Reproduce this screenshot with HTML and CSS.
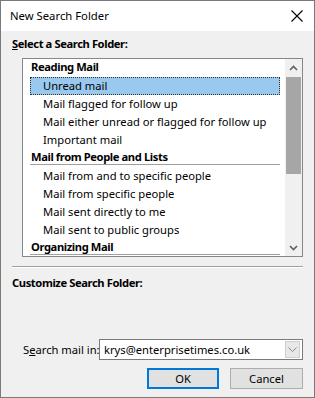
FILE: index.html
```html
<!DOCTYPE html>
<html>
<head>
<meta charset="utf-8">
<link rel="stylesheet" href="styles.css">
</head>
<body>
<div class="window">
  <div class="titlebar">
    <span class="title">New Search Folder</span>
    <svg class="close" width="12" height="12" viewBox="0 0 12 12"><path d="M0.5 0.5 L11.5 11.5 M11.5 0.5 L0.5 11.5" stroke="#000" stroke-width="1.1" fill="none"/></svg>
  </div>
  <div class="content">
    <div class="label bold"><u>S</u>elect a Search Folder:</div>
    <div class="listbox">
      <div class="list">
        <div class="row header first">Reading Mail</div>
        <div class="row item selected">Unread mail</div>
        <div class="row item">Mail flagged for follow up</div>
        <div class="row item">Mail either unread or flagged for follow up</div>
        <div class="row item">Important mail</div>
        <div class="row header">Mail from People and Lists</div>
        <div class="row item">Mail from and to specific people</div>
        <div class="row item">Mail from specific people</div>
        <div class="row item">Mail sent directly to me</div>
        <div class="row item">Mail sent to public groups</div>
        <div class="row header">Organizing Mail</div>
      </div>
      <div class="scrollbar">
        <div class="arrow">
          <svg width="9" height="6" viewBox="0 0 9 6"><path d="M1 5 L4.5 1.5 L8 5" stroke="#606060" stroke-width="1.6" fill="none"/></svg>
        </div>
        <div class="track"><div class="thumb"></div></div>
        <div class="arrow">
          <svg width="9" height="6" viewBox="0 0 9 6"><path d="M1 1 L4.5 4.5 L8 1" stroke="#606060" stroke-width="1.6" fill="none"/></svg>
        </div>
      </div>
    </div>
    <div class="separator"></div>
    <div class="label bold custom">Customize Search Folder:</div>
    <div class="search-row">
      <span class="search-label">S<u>e</u>arch mail in:</span>
      <div class="combo">
        <span class="combo-text">krys@enterprisetimes.co.uk</span>
        <div class="combo-btn">
          <svg width="9" height="5" viewBox="0 0 9 5"><path d="M0.5 0.5 L4.5 4.5 L8.5 0.5" stroke="#8a8a8a" stroke-width="1" fill="none"/></svg>
        </div>
      </div>
    </div>
    <div class="buttons">
      <div class="btn default">OK</div>
      <div class="btn">Cancel</div>
    </div>
  </div>
</div>
</body>
</html>
```
FILE: styles.css
```css
* { box-sizing: border-box; }
html, body {
  margin: 0;
  padding: 0;
  width: 315px;
  height: 398px;
  overflow: hidden;
  background: #ffffff;
}
body {
  font-family: "Noto Sans", "Open Sans", sans-serif;
  font-size: 11.2px;
  color: #000;
}
.window {
  width: 315px;
  height: 398px;
  border: 1px solid #7a7a7a;
  display: flex;
  flex-direction: column;
  background: #f0f0f0;
}
.titlebar {
  height: 30px;
  background: #fff;
  display: flex;
  align-items: center;
  padding-left: 9px;
  padding-right: 11px;
  justify-content: space-between;
}
.title {
  font-size: 11.3px;
  line-height: 16px;
}
.close { display: block; }
.content {
  flex: 1;
  display: flex;
  flex-direction: column;
  padding: 5px 11px 8px 11px;
}
.label {
  line-height: 16px;
}
.bold {
  font-weight: bold;
  letter-spacing: -0.4px;
}
.listbox {
  margin: 6px 0 0 10px;
  width: 281px;
  height: 199px;
  border: 1px solid #828790;
  background: #fff;
  display: flex;
  overflow: hidden;
}
.list {
  flex: 1;
  overflow: hidden;
  padding-left: 7px;
  padding-right: 5px;
}
.row {
  height: 18px;
  line-height: 18px;
  white-space: nowrap;
}
.header {
  font-weight: bold;
  letter-spacing: -0.4px;
  padding-left: 1px;
  line-height: 16px;
  border-bottom: 2px solid #fff;
  box-shadow: inset 0 -1px 0 #a0a0a0;
  height: 18px;
}
.header.first { box-shadow: none; }
.item {
  padding-left: 13px;
}
.selected {
  background: #99c9ef;
  outline: 1px dotted #333;
  outline-offset: -1px;
}
.scrollbar {
  width: 17px;
  background: #f0f0f0;
  display: flex;
  flex-direction: column;
}
.arrow {
  height: 17px;
  display: flex;
  align-items: center;
  justify-content: center;
}
.track {
  flex: 1;
  padding: 1px 1px 0 1px;
}
.thumb {
  height: 97px;
  background: #a6a6a6;
}
.separator {
  margin-top: 9px;
  height: 2px;
  border-top: 1px solid #a0a0a0;
  border-bottom: 1px solid #fff;
  width: 291px;
}
.custom {
  margin-top: 7px;
}
.search-row {
  margin-top: auto;
  display: flex;
  align-items: center;
  padding-left: 11px;
}
.search-label {
  width: 76px;
  flex-shrink: 0;
  white-space: nowrap;
  line-height: 16px;
}
.combo {
  width: 204px;
  flex-shrink: 0;
  height: 21px;
  border: 1px solid #7a7a7a;
  background: #fff;
  display: flex;
  align-items: center;
  justify-content: space-between;
  padding-left: 4px;
  padding-right: 2px;
}
.combo-text { line-height: 16px; }
.combo-btn {
  width: 15px;
  height: 17px;
  border: 1px solid #cfcfcf;
  background: #e8e8e8;
  display: flex;
  align-items: center;
  justify-content: center;
}
.buttons {
  margin-top: 8px;
  display: flex;
  justify-content: flex-end;
  gap: 11px;
  padding-right: 0;
}
.btn {
  width: 73px;
  height: 21px;
  border: 1px solid #adadad;
  background: #e1e1e1;
  display: flex;
  align-items: center;
  justify-content: center;
  line-height: 16px;
}
.btn.default {
  border: 2px solid #0078d7;
  width: 72px;
}
```
